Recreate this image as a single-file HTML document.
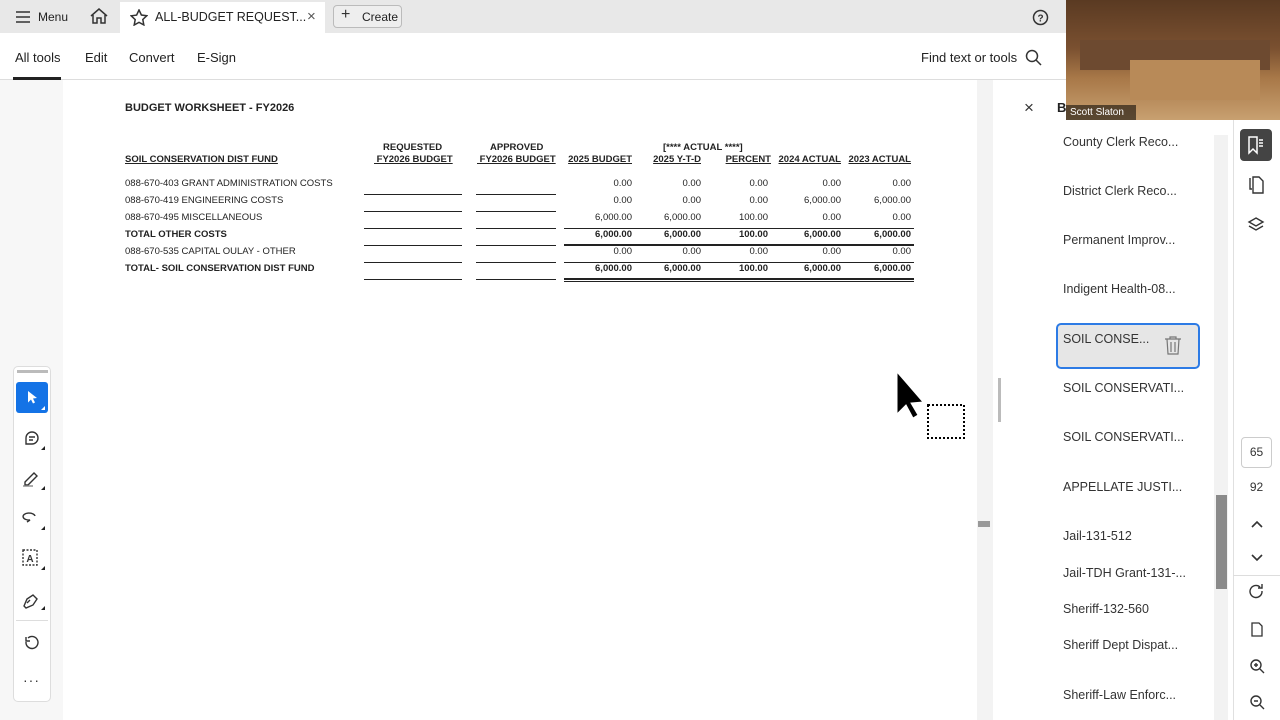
<!DOCTYPE html>
<html><head><style>
*{margin:0;padding:0;box-sizing:border-box}
body{width:1280px;height:720px;position:relative;overflow:hidden;font-family:"Liberation Sans",sans-serif;background:#fff}
.a{position:absolute}
.top{left:0;top:0;width:1280px;height:33px;background:#e8e8e8}
.t{font-size:12px;color:#222}
.doc{font-size:9.5px;color:#222;font-family:"Liberation Sans",Arial,sans-serif}
.b{font-weight:bold}
.r{text-align:right;width:80px}
.u{text-decoration:underline}
.ln{height:1px;background:#222}
.pl{font-size:12.5px;color:#333;left:1063px}
.ic{stroke:#333;fill:none;stroke-width:1.5}
</style></head><body>
<div class="a top"></div>
<div class="a" style="left:120px;top:2px;width:205px;height:31px;background:#fff"></div>
<svg class="a" style="left:15px;top:10px" width="16" height="14"><path d="M1 2h14M1 7h14M1 12h14" class="ic"/></svg>
<div class="a t" style="left:38px;top:10px;font-size:12px">Menu</div>
<svg class="a" style="left:89px;top:7px" width="20" height="18"><path d="M2 9L10 2l8 7M4 8v8h4v-5h4v5h4V8" class="ic"/></svg>
<svg class="a" style="left:130px;top:9px" width="18" height="17"><path d="M9 1l2.4 5 5.4.7-4 3.8 1 5.4L9 13.3 4.2 16l1-5.4-4-3.8 5.4-.7z" class="ic" stroke-width="1.2"/></svg>
<div class="a t" style="left:155px;top:10px;font-size:12.5px">ALL-BUDGET REQUEST...</div>
<div class="a" style="left:307px;top:8px;font-size:15px;color:#555">×</div>
<div class="a" style="left:333px;top:5px;width:69px;height:23px;border:1px solid #bbb;border-radius:4px;background:#eee"></div>
<div class="a" style="left:341px;top:6px;font-size:16px;color:#333">+</div>
<div class="a t" style="left:362px;top:10px;font-size:12px">Create</div>
<svg class="a" style="left:1032px;top:9px" width="17" height="17"><circle cx="8.5" cy="8.5" r="7" class="ic"/><text x="8.5" y="12.5" font-size="10" text-anchor="middle" fill="#333" font-family="Liberation Sans" font-weight="bold">?</text></svg>

<div class="a" style="left:0;top:79px;width:1280px;height:1px;background:#ddd"></div>
<div class="a t" style="left:15px;top:50px;font-size:13px">All tools</div>
<div class="a" style="left:13px;top:77px;width:48px;height:3px;background:#222"></div>
<div class="a t" style="left:85px;top:50px;font-size:13px">Edit</div>
<div class="a t" style="left:129px;top:50px;font-size:13px">Convert</div>
<div class="a t" style="left:197px;top:50px;font-size:13px">E-Sign</div>
<div class="a t" style="left:921px;top:50px;font-size:13px">Find text or tools</div>
<svg class="a" style="left:1025px;top:49px" width="17" height="17"><circle cx="7" cy="7" r="5.5" class="ic"/><path d="M11 11l5 5" class="ic"/></svg>

<div class="a" style="left:0;top:80px;width:63px;height:640px;background:#f7f7f7"></div>
<div class="a" style="left:977px;top:80px;width:16px;height:640px;background:#f3f3f3"></div>
<div class="a" style="left:978px;top:521px;width:12px;height:6px;background:#999"></div>
<div class="a" style="left:998px;top:378px;width:3px;height:44px;background:#bbb"></div>
<div class="a" style="left:1214px;top:135px;width:14px;height:585px;background:#f2f2f2"></div>
<div class="a" style="left:1216px;top:495px;width:11px;height:94px;background:#8a8a8a"></div>
<div class="a" style="left:1233px;top:120px;width:1px;height:600px;background:#e0e0e0"></div>

<!-- left toolbar -->
<div class="a" style="left:13px;top:366px;width:38px;height:336px;border:1px solid #ddd;border-radius:5px;background:#fff"></div>
<div class="a" style="left:17px;top:370px;width:31px;height:3px;background:#bbb"></div>
<div class="a" style="left:16px;top:382px;width:32px;height:31px;background:#1473e6;border-radius:3px"></div>
<svg class="a" style="left:16px;top:382px" width="32" height="31"><path d="M12 9l9 7-4 .5 2 4-2 1-2-4-3 3z" fill="#fff"/><path d="M29 24v4h-4z" fill="#fff"/></svg>
<svg class="a" style="left:20px;top:428px" width="26" height="230" fill="none" stroke="#333" stroke-width="1.4">
<path d="M6 10a6 6 0 1 1 6 6H6z"/><path d="M9 9h6M9 12h4"/>
<path d="M5 54l9-9 3 3-9 9H5z"/><path d="M3 58h10" stroke="#888"/>
<path d="M15 88a6 3.5 0 1 0-5 4l-3 2"/>
<rect x="3" y="122" width="14" height="15" stroke-dasharray="2 1.5"/><text x="10" y="134" font-size="10" text-anchor="middle" fill="#333" stroke="none" font-family="Liberation Sans" font-weight="bold">A</text>
<path d="M4 178l3-7 6-4 4 4-4 6-7 3zM7 175l3-3"/>
<path d="M6 214a6 6 0 1 0 2-4M6 209v4h4"/>
</svg>
<svg class="a" style="left:20px;top:428px" width="26" height="220"><g fill="#222"><path d="M25 18v4h-4zM25 58v4h-4zM25 98v4h-4zM25 138v4h-4zM25 178v4h-4z"/></g></svg>
<div class="a" style="left:16px;top:620px;width:32px;height:1px;background:#ddd"></div>
<div class="a" style="left:23px;top:672px;font-size:14px;color:#333;letter-spacing:1px">···</div>

<!-- document -->
<div class="a doc b" style="left:125px;top:102px;font-size:11px">BUDGET WORKSHEET - FY2026</div>
<div class="a doc b" style="left:383px;top:142px">REQUESTED</div>
<div class="a doc b u" style="left:374px;top:154px">&nbsp;FY2026 BUDGET</div>
<div class="a doc b" style="left:490px;top:142px">APPROVED</div>
<div class="a doc b u" style="left:477px;top:154px">&nbsp;FY2026 BUDGET</div>
<div class="a doc b" style="left:663px;top:142px">[**** ACTUAL ****]</div>
<div class="a doc b u" style="left:125px;top:154px">SOIL CONSERVATION DIST FUND</div>
<div class="a doc b u r" style="left:552px;top:154px">2025 BUDGET</div>
<div class="a doc b u r" style="left:621px;top:154px">2025 Y-T-D</div>
<div class="a doc b u r" style="left:691px;top:154px">PERCENT</div>
<div class="a doc b u r" style="left:761px;top:154px">2024 ACTUAL</div>
<div class="a doc b u r" style="left:831px;top:154px">2023 ACTUAL</div>

<div class="a doc" style="left:125px;top:178px">088-670-403 GRANT ADMINISTRATION COSTS</div>
<div class="a doc" style="left:125px;top:195px">088-670-419 ENGINEERING COSTS</div>
<div class="a doc" style="left:125px;top:212px">088-670-495 MISCELLANEOUS</div>
<div class="a doc b" style="left:125px;top:229px">TOTAL OTHER COSTS</div>
<div class="a doc" style="left:125px;top:246px">088-670-535 CAPITAL OULAY - OTHER</div>
<div class="a doc b" style="left:125px;top:263px">TOTAL- SOIL CONSERVATION DIST FUND</div>

<div class="a doc r" style="left:552px;top:175px;line-height:17px">0.00<br>0.00<br>6,000.00<br><b>6,000.00</b><br>0.00<br><b>6,000.00</b></div>
<div class="a doc r" style="left:621px;top:175px;line-height:17px">0.00<br>0.00<br>6,000.00<br><b>6,000.00</b><br>0.00<br><b>6,000.00</b></div>
<div class="a doc r" style="left:688px;top:175px;line-height:17px">0.00<br>0.00<br>100.00<br><b>100.00</b><br>0.00<br><b>100.00</b></div>
<div class="a doc r" style="left:761px;top:175px;line-height:17px">0.00<br>6,000.00<br>0.00<br><b>6,000.00</b><br>0.00<br><b>6,000.00</b></div>
<div class="a doc r" style="left:831px;top:175px;line-height:17px">0.00<br>6,000.00<br>0.00<br><b>6,000.00</b><br>0.00<br><b>6,000.00</b></div>

<div class="a ln" style="left:364px;top:194px;width:98px"></div><div class="a ln" style="left:476px;top:194px;width:80px"></div>
<div class="a ln" style="left:364px;top:211px;width:98px"></div><div class="a ln" style="left:476px;top:211px;width:80px"></div>
<div class="a ln" style="left:364px;top:228px;width:98px"></div><div class="a ln" style="left:476px;top:228px;width:80px"></div>
<div class="a ln" style="left:364px;top:245px;width:98px"></div><div class="a ln" style="left:476px;top:245px;width:80px"></div>
<div class="a ln" style="left:364px;top:262px;width:98px"></div><div class="a ln" style="left:476px;top:262px;width:80px"></div>
<div class="a ln" style="left:364px;top:279px;width:98px"></div><div class="a ln" style="left:476px;top:279px;width:80px"></div>
<div class="a ln" style="left:564px;top:228px;width:350px"></div>
<div class="a ln" style="left:564px;top:244px;width:350px;height:2px"></div>
<div class="a ln" style="left:564px;top:262px;width:350px"></div>
<div class="a ln" style="left:564px;top:278px;width:350px;height:2px"></div>
<div class="a ln" style="left:564px;top:281px;width:350px"></div>

<!-- cursor -->
<svg class="a" style="left:894px;top:370px" width="75" height="72"><path d="M3 2v42l9-9 7 13 5-3-7-12 12-1z" fill="#000" stroke="#fff" stroke-width="1"/><rect x="34" y="35" width="36" height="33" fill="none" stroke="#000" stroke-width="2" stroke-dasharray="2 2"/></svg>

<!-- panel -->
<div class="a" style="left:1024px;top:98px;font-size:17px;color:#333">×</div>
<div class="a" style="left:1057px;top:100px;font-size:13px;font-weight:bold;color:#222">B</div>
<div class="a pl" style="top:135px">County Clerk Reco...</div>
<div class="a pl" style="top:184px">District Clerk Reco...</div>
<div class="a pl" style="top:233px">Permanent Improv...</div>
<div class="a pl" style="top:282px">Indigent Health-08...</div>
<div class="a" style="left:1056px;top:323px;width:144px;height:46px;border:2px solid #2d7be5;border-radius:5px;background:#e6e6e6"></div>
<div class="a pl" style="top:332px">SOIL CONSE...</div>
<svg class="a" style="left:1163px;top:336px" width="20" height="20" fill="none" stroke="#777" stroke-width="1.2"><path d="M2 3h16M7 3V1h6v2M4 3l1 15h10l1-15M8 6v10M12 6v10"/></svg>
<div class="a pl" style="top:381px">SOIL CONSERVATI...</div>
<div class="a pl" style="top:430px">SOIL CONSERVATI...</div>
<div class="a pl" style="top:480px">APPELLATE JUSTI...</div>
<div class="a pl" style="top:529px">Jail-131-512</div>
<div class="a pl" style="top:566px">Jail-TDH Grant-131-...</div>
<div class="a pl" style="top:602px">Sheriff-132-560</div>
<div class="a pl" style="top:638px">Sheriff Dept Dispat...</div>
<div class="a pl" style="top:688px">Sheriff-Law Enforc...</div>

<!-- right rail -->
<div class="a" style="left:1240px;top:129px;width:32px;height:32px;background:#444;border-radius:4px"></div>
<svg class="a" style="left:1240px;top:129px" width="32" height="32" fill="none" stroke="#fff" stroke-width="1.5"><path d="M9 8v16l4-4 4 4V8z"/><path d="M19 11h4M19 14h4M19 17h4"/></svg>
<svg class="a" style="left:1246px;top:174px" width="20" height="100" fill="none" stroke="#333" stroke-width="1.4"><path d="M4 4v11h2M7 3h6l4 4v12H7z"/><path d="M10 44l7 4-7 4-7-4zM3 52l7 4 7-4"/></svg>
<div class="a" style="left:1241px;top:437px;width:31px;height:31px;border:1px solid #ccc;border-radius:4px;font-size:12px;color:#333;text-align:center;line-height:29px">65</div>
<div class="a" style="left:1241px;top:480px;width:31px;font-size:12px;color:#333;text-align:center">92</div>
<svg class="a" style="left:1248px;top:515px" width="18" height="200" fill="none" stroke="#333" stroke-width="1.6"><path d="M4 12l5-5 5 5M4 40l5 5 5-5"/><path d="M14 76a6 6 0 1 1-2-4M14 69v4h-4" stroke-width="1.4"/><path d="M4 108h7l3 3v10H4z" stroke-width="1.3"/><circle cx="8" cy="150" r="5" stroke-width="1.4"/><path d="M12 154l4 4M6 150h4M8 148v4" stroke-width="1.4"/><circle cx="8" cy="186" r="5" stroke-width="1.4"/><path d="M12 190l4 4M6 186h4" stroke-width="1.4"/></svg>
<div class="a" style="left:1233px;top:575px;width:47px;height:1px;background:#ddd"></div>

<!-- video -->
<div class="a" style="left:1066px;top:0;width:214px;height:120px;background:linear-gradient(180deg,#5a3a22 0%,#7a5030 40%,#a87848 65%,#c8a070 100%)"></div>
<div class="a" style="left:1080px;top:40px;width:190px;height:30px;background:#6d4a30"></div>
<div class="a" style="left:1130px;top:60px;width:130px;height:40px;background:#b88a58"></div>
<div class="a" style="left:1066px;top:105px;width:70px;height:15px;background:rgba(0,0,0,.55)"></div>
<div class="a" style="left:1070px;top:107px;font-size:10px;color:#fff">Scott Slaton</div>
</body></html>
